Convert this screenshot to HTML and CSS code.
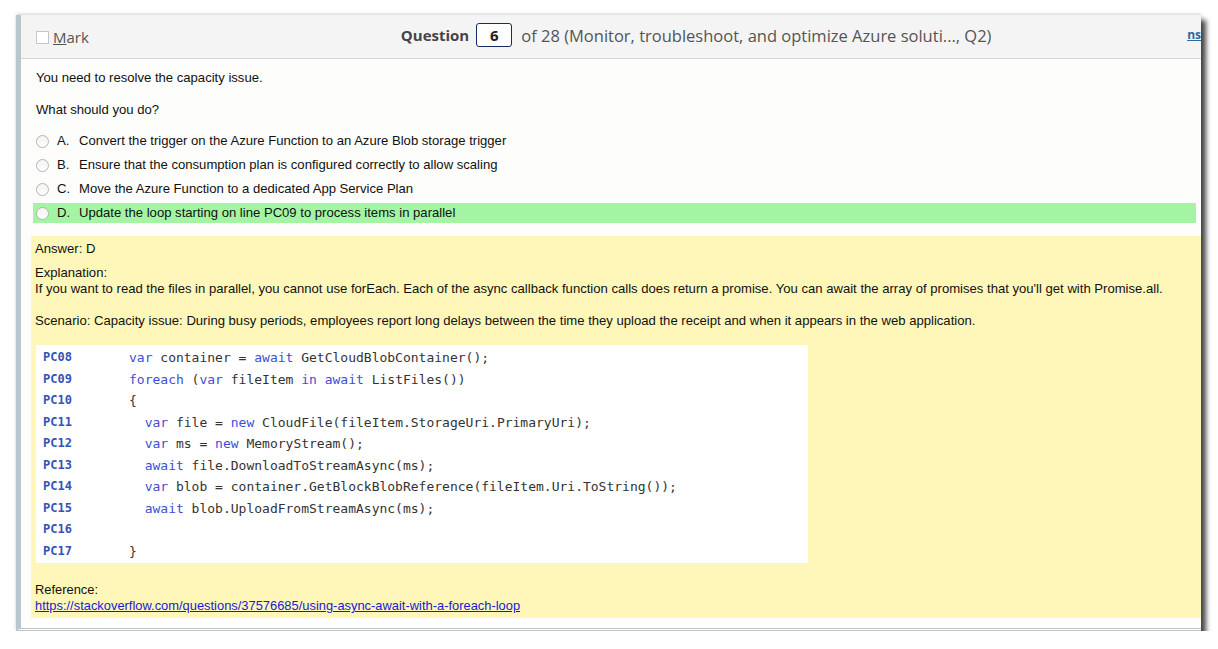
FILE: index.html
```html
<!DOCTYPE html>
<html lang="en">
<head>
<meta charset="utf-8">
<title>Question 6 of 28</title>
<link rel="stylesheet" href="styles.css">
</head>
<body>
<div class="window">
  <div class="header">
    <label class="mark"><span class="checkbox"></span><span class="mark-text"><u>M</u>ark</span></label>
    <div class="qnav">
      <span class="qlabel">Question</span>
      <span class="qbox">6</span>
      <span class="qof">of 28 (Monitor, troubleshoot, and optimize Azure soluti..., Q2)</span>
    </div>
    <a class="instr" href="#">ns</a>
  </div>
  <div class="content">
    <p class="para">You need to resolve the capacity issue.</p>
    <p class="para">What should you do?</p>
    <div class="options">
      <div class="opt"><span class="radio"></span><span class="letter">A.</span><span>Convert the trigger on the Azure Function to an Azure Blob storage trigger</span></div>
      <div class="opt"><span class="radio"></span><span class="letter">B.</span><span>Ensure that the consumption plan is configured correctly to allow scaling</span></div>
      <div class="opt"><span class="radio"></span><span class="letter">C.</span><span>Move the Azure Function to a dedicated App Service Plan</span></div>
      <div class="opt correct"><span class="radio"></span><span class="letter">D.</span><span>Update the loop starting on line PC09 to process items in parallel</span></div>
    </div>
    <div class="answer">
      <div class="ans-line">Answer: D</div>
      <div class="expl">Explanation:<br>If you want to read the files in parallel, you cannot use forEach. Each of the async callback function calls does return a promise. You can await the array of promises that you'll get with Promise.all.<br><br>Scenario: Capacity issue: During busy periods, employees report long delays between the time they upload the receipt and when it appears in the web application.</div>
      <div class="code">
        <div class="ln">PC08</div><div class="src"><span class="kw">var</span> container = <span class="kw">await</span> GetCloudBlobContainer();</div>
        <div class="ln">PC09</div><div class="src"><span class="kw">foreach</span> (<span class="kw">var</span> fileItem <span class="kw">in</span> <span class="kw">await</span> ListFiles())</div>
        <div class="ln">PC10</div><div class="src">{</div>
        <div class="ln">PC11</div><div class="src">  <span class="kw">var</span> file = <span class="kw">new</span> CloudFile(fileItem.StorageUri.PrimaryUri);</div>
        <div class="ln">PC12</div><div class="src">  <span class="kw">var</span> ms = <span class="kw">new</span> MemoryStream();</div>
        <div class="ln">PC13</div><div class="src">  <span class="kw">await</span> file.DownloadToStreamAsync(ms);</div>
        <div class="ln">PC14</div><div class="src">  <span class="kw">var</span> blob = container.GetBlockBlobReference(fileItem.Uri.ToString());</div>
        <div class="ln">PC15</div><div class="src">  <span class="kw">await</span> blob.UploadFromStreamAsync(ms);</div>
        <div class="ln">PC16</div><div class="src"> </div>
        <div class="ln">PC17</div><div class="src">}</div>
      </div>
      <div class="ref">Reference:<br><a href="#">https://stackoverflow.com/questions/37576685/using-async-await-with-a-foreach-loop</a></div>
    </div>
  </div>
</div>
</body>
</html>
```
FILE: styles.css
```css
html, body {
  margin: 0;
  padding: 0;
  background: #ffffff;
}

body {
  padding: 15px 0 0 16px;
}

.window {
  width: 1180px;
  height: 613px;
  border-left: 5px solid #b8c7cb;
  border-bottom: 3px double #bcc6ca;
  background: #fdfdfb;
  overflow: hidden;
  box-shadow: 5px 5px 5px rgba(0, 0, 0, 0.72), 0 -1px 3px rgba(0, 0, 0, 0.18);
  display: flex;
  flex-direction: column;
}

.header {
  height: 43px;
  flex: none;
  background: #f4f4f4;
  border-bottom: 1px solid #d5d5d5;
  display: flex;
  align-items: center;
  font-family: "Open Sans", "Noto Sans", sans-serif;
}

.mark {
  display: flex;
  align-items: center;
  margin-left: 15px;
  margin-top: 1px;
  color: #555;
  font-size: 15px;
}

.checkbox {
  width: 11px;
  height: 11px;
  border: 1px solid #c6c6c6;
  background: #fff;
  margin-right: 4px;
}

.qnav {
  display: flex;
  align-items: center;
  margin-left: 312px;
  margin-top: -3px;
  color: #444;
}

.qlabel {
  font-weight: 700;
  font-size: 15px;
  color: #444;
}

.qbox {
  width: 34px;
  height: 22px;
  border: 1px solid #1b2a66;
  border-radius: 3px;
  margin: 0 9px 0 7px;
  display: flex;
  align-items: center;
  justify-content: center;
  font-weight: 700;
  font-size: 15px;
  color: #222;
  background: #fff;
}

.qof {
  font-size: 16.5px;
  color: #555;
}

.instr {
  margin-left: auto;
  margin-right: 0;
  margin-top: -4px;
  font-size: 12px;
  font-weight: 700;
  color: #2a6a9e;
  text-decoration: underline;
}

.content {
  flex: 1;
  padding: 11px 0 0 10px;
  font-family: "Liberation Sans", Arial, sans-serif;
  font-size: 13.1px;
  line-height: 16px;
  color: #111;
}

.para {
  margin: 0 0 16px 5px;
}

.options {
  display: flex;
  flex-direction: column;
  gap: 4px;
  margin: -3px 5px 0 2px;
}

.opt {
  height: 20px;
  display: flex;
  align-items: center;
  padding-left: 3px;
}

.opt.correct {
  background: #a3f5a3;
}

.radio {
  width: 11px;
  height: 11px;
  border: 1px solid #b5b5b5;
  border-radius: 50%;
  background: linear-gradient(#f2f2f2, #ffffff);
  margin-right: 8px;
  flex: none;
}

.letter {
  width: 22px;
  flex: none;
}

.answer {
  margin-top: 13px;
  background: #fef7b9;
  padding: 5px 0 4px 4px;
}

.ans-line {
  margin-bottom: 8px;
}

.expl {
  margin-bottom: 16px;
}

.code {
  margin-left: 1px;
  width: 772px;
  height: 218px;
  box-sizing: border-box;
  padding: 2px 0 1px 7px;
  background: #ffffff;
  display: grid;
  grid-template-columns: 86px 1fr;
  grid-auto-rows: 21.5px;
  align-items: center;
  font-family: "DejaVu Sans Mono", "Liberation Mono", monospace;
  font-size: 13px;
  line-height: 21.5px;
  color: #333;
}

.ln {
  color: #3453b8;
  font-weight: 700;
  font-size: 12px;
}

.src {
  white-space: pre;
}

.kw {
  color: #3d4fd3;
}

.ref {
  margin-top: 19px;
  font-size: 12.9px;
}

.ref a {
  color: #1a1ad6;
  text-decoration: underline;
}
```
